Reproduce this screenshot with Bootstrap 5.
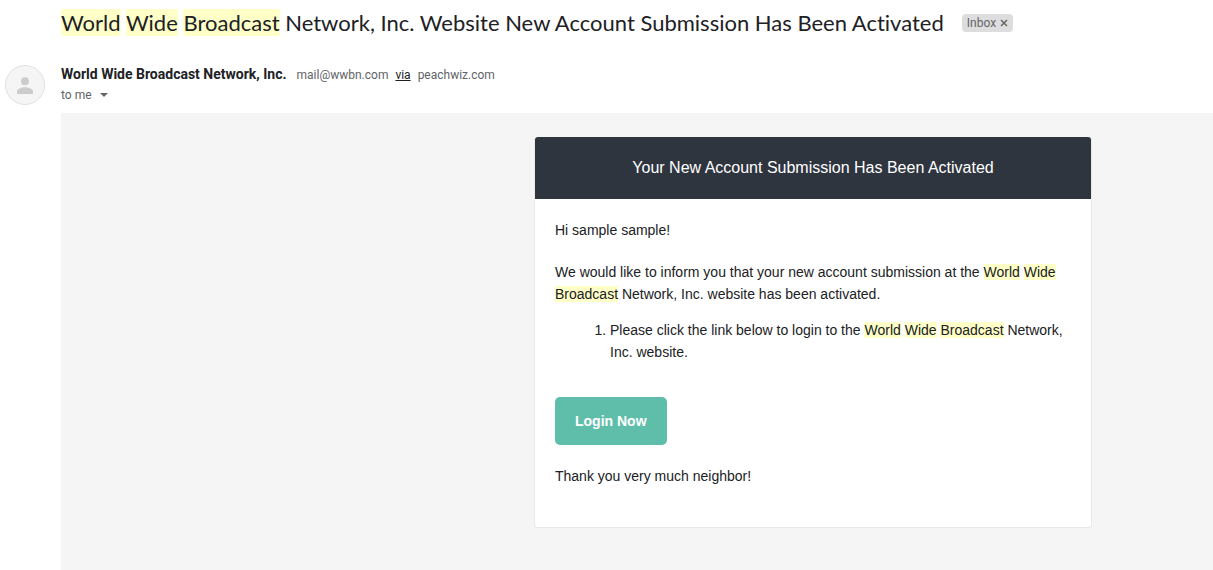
<!DOCTYPE html>
<html lang="en">
<head>
<meta charset="utf-8">
<meta name="viewport" content="width=device-width, initial-scale=1">
<title>New Account Submission Has Been Activated</title>
<link href="https://cdn.jsdelivr.net/npm/bootstrap@5.3.0/dist/css/bootstrap.min.css" rel="stylesheet">
<style>
body { font-family: Roboto, "Liberation Sans", sans-serif; font-size: 12px; line-height: 20px; color: #202124; background: #fff; }
.hit { background: #ffffc8; }
.subject-row { padding-left: 61px; padding-top: 9px; column-gap: 18px; }
.subject { font-family: Lato, "Open Sans", sans-serif; font-size: 22px; line-height: 28px; font-variant-ligatures: none; }
.folder-tag { background: #ddd; color: #666; height: 18px; padding: 0 5px; line-height: 18px; border-radius: 4px; }
.folder-tag button { color: inherit; line-height: 18px; }
.sender-row { padding: 27px 5px 0; column-gap: 16px; }
.avatar { width: 40px; height: 40px; margin-top: 1px; }
.sender-line { column-gap: 10px; }
.sender-name { font-size: 14px; }
.muted { color: #5f6368; }
.via-link { color: #202124; }
.recipients { font-size: 12px; line-height: 20px; }
.message { margin-left: 61px; padding: 24px 121px 42px 24px; background: #f5f5f5; }
.notice { max-width: 558px; border: 1px solid #e9e9e9; border-top: 0; border-radius: 3px; font-family: "Liberation Sans", Arial, sans-serif; font-size: 14px; line-height: 22px; color: #202124; }
.notice-head { background: #2f353f; color: #fff; font-size: 16px; line-height: 22px; padding: 20px; border-radius: 3px 3px 0 0; }
.notice-body { padding: 20px 20px 40px; }
.notice-body p { margin-bottom: 20px; }
.steps { margin: -6px 0 34px; padding-left: 55px; }
.login-btn { background: #5fbeaa; color: #fff; font-size: 14px; line-height: 22px; padding: 13px 20px; border: 0; border-radius: 5px; margin-bottom: 20px; }
.login-btn:hover { background: #52ab98; color: #fff; }
</style>
</head>
<body class="d-flex flex-column min-vh-100">
<header>
  <div class="subject-row d-flex flex-wrap align-items-center">
    <h1 class="subject fw-normal mb-0"><span class="hit">World</span> <span class="hit">Wide</span> <span class="hit">Broadcast</span> Network, Inc. Website New Account Submission Has Been Activated</h1>
    <span class="folder-tag d-inline-flex align-items-center gap-1">Inbox
      <button type="button" class="btn p-0 border-0 d-flex" aria-label="Remove label Inbox"><svg width="8" height="8" viewBox="0 0 8 8" fill="none" stroke="currentColor" stroke-width="1.5" aria-hidden="true"><path d="M1 1l6 6M7 1L1 7"/></svg></button>
    </span>
  </div>
  <div class="sender-row d-flex align-items-start">
    <svg class="avatar flex-shrink-0" viewBox="0 0 40 40" role="img" aria-label="Sender"><circle cx="20" cy="20" r="19.5" fill="#f5f5f5" stroke="#e0e0e0"/><circle cx="20" cy="16.2" r="4" fill="#ccc"/><path d="M12 29v-2.500c0-2.800 5.300-4.200 8-4.200s8 1.400 8 4.200V29z" fill="#ccc"/></svg>
    <div>
      <div class="sender-line d-flex flex-wrap align-items-baseline"><span class="sender-name fw-bold">World Wide Broadcast Network, Inc.</span><span class="muted">mail@wwbn.com <a class="via-link mx-1" href="#">via</a> peachwiz.com</span></div>
      <button type="button" class="btn recipients p-0 border-0 d-flex align-items-center muted">to me<svg class="ms-2" width="8" height="4" viewBox="0 0 8 4" aria-hidden="true"><path d="M0 0h8L4 4z" fill="#666"/></svg></button>
    </div>
  </div>
</header>
<main class="message flex-grow-1 mt-2">
  <article class="notice bg-white ms-auto">
    <h2 class="notice-head text-center fw-normal mb-0">Your New Account Submission Has Been Activated</h2>
    <div class="notice-body">
      <p>Hi sample sample!</p>
      <p>We would like to inform you that your new account submission at the <span class="hit">World</span> <span class="hit">Wide</span> <span class="hit">Broadcast</span> Network, Inc. website has been activated.</p>
      <ol class="steps"><li>Please click the link below to login to the <span class="hit">World</span> <span class="hit">Wide</span> <span class="hit">Broadcast</span> Network, Inc. website.</li></ol>
      <button type="button" class="btn login-btn fw-bold d-block">Login Now</button>
      <p class="mb-0">Thank you very much neighbor!</p>
    </div>
  </article>
</main>
<script src="https://cdn.jsdelivr.net/npm/bootstrap@5.3.0/dist/js/bootstrap.bundle.min.js"></script>
</body>
</html>
